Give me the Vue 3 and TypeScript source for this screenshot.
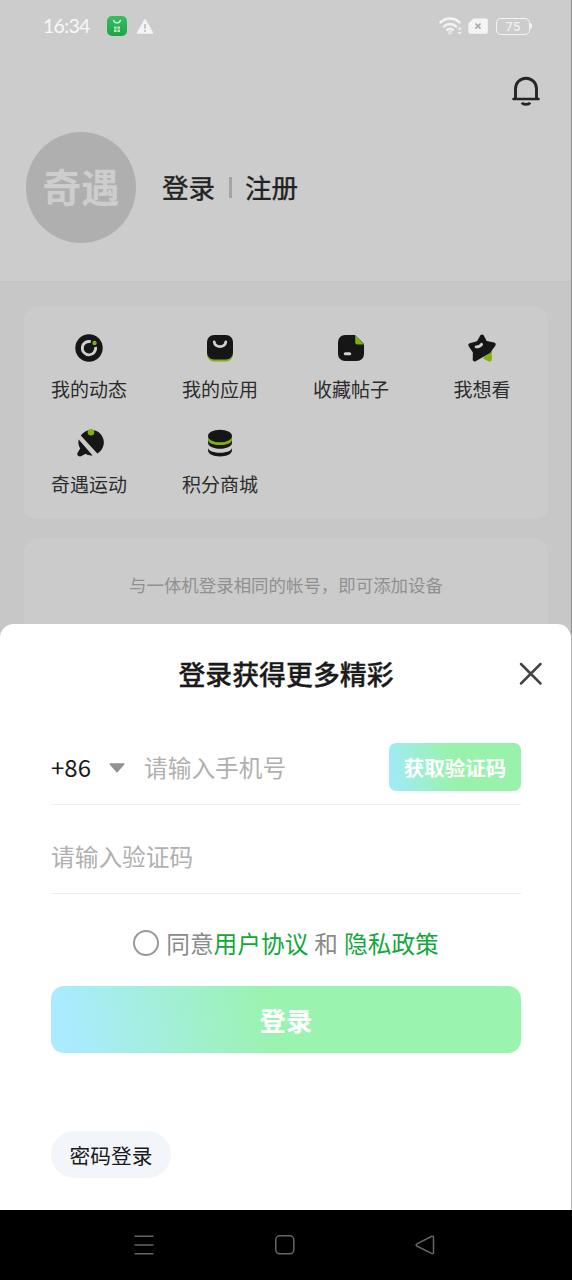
<script setup lang="ts">
import { ref } from 'vue'

type IconName = 'moments' | 'apps' | 'posts' | 'star' | 'sport' | 'coins'

interface Entry {
  icon: IconName
  label: string
}

const entries: Entry[] = [
  { icon: 'moments', label: '我的动态' },
  { icon: 'apps', label: '我的应用' },
  { icon: 'posts', label: '收藏帖子' },
  { icon: 'star', label: '我想看' },
  { icon: 'sport', label: '奇遇运动' },
  { icon: 'coins', label: '积分商城' },
]

const phone = ref('')
const code = ref('')
const agreed = ref(false)
</script>

<template>
  <div class="screen">
    <section class="home">
      <div class="top">
        <div class="status">
          <span class="clock">16:34</span>
          <svg class="app-badge" width="20" height="20" viewBox="0 0 20 20">
            <defs>
              <linearGradient id="badge" x1="0" y1="0" x2="0" y2="1">
                <stop offset="0" stop-color="#35bf63" />
                <stop offset="1" stop-color="#1fa548" />
              </linearGradient>
            </defs>
            <rect width="20" height="20" rx="5" fill="url(#badge)" />
            <path d="M6.6 4.4c1.2 3.2 5.6 3.2 6.8 0" fill="none" stroke="#d5efdc" stroke-width="1.4" stroke-linecap="round" />
            <path d="M7 10.4h2.6v2.4H7zM10.4 10.4H13v2.4h-2.6zM7 13.5h2.6v2.4H7zM10.4 13.5H13v2.4h-2.6z" fill="#b9e6c6" />
          </svg>
          <svg class="warn" width="18" height="17" viewBox="0 0 18 17">
            <path d="M9 1.2 17 15.2H1z" fill="#f4f4f4" stroke="#f4f4f4" stroke-width="1" stroke-linejoin="round" />
            <path d="M9 6v4.8M9 12v2" stroke="#c2c2c2" stroke-width="1.8" />
          </svg>
          <span class="spacer"></span>
          <svg class="wifi" width="24" height="20" viewBox="0 0 24 20" fill="none" stroke="#f4f4f4" stroke-width="2.4" stroke-linecap="round">
            <path d="M1.5 6.4c5.4-5.3 13.6-5.3 19 0M5 10.4c3.5-3.3 8.5-3.3 12 0M8.3 14c1.7-1.5 3.7-1.5 5.4 0" />
            <circle cx="11" cy="16.7" r=".5" />
            <path d="m18.6 13.4 2.1-2.4 2.1 2.4zM18.6 15.9l2.1 2.4 2.1-2.4z" fill="#f4f4f4" stroke="none" />
          </svg>
          <svg class="sim" width="20" height="17" viewBox="0 0 20 17">
            <path d="M5.5.5H18a1.8 1.8 0 0 1 1.8 1.8V14a1.8 1.8 0 0 1-1.8 1.8H2.2A1.8 1.8 0 0 1 .4 14V5.5z" fill="#f4f4f4" />
            <path d="m7.4 5.5 5.2 5.2m0-5.2-5.2 5.2" stroke="#a9a9a9" stroke-width="1.7" />
          </svg>
          <span class="battery">75</span>
        </div>

        <svg class="bell" width="30" height="32" viewBox="0 0 30 32" fill="none" stroke="#242424" stroke-width="2.9">
          <path d="M4.5 24V13.7a10.5 10.5 0 0 1 21 0V24" />
          <path d="M2.5 24h25" stroke-linecap="round" stroke-width="2.6" />
          <path d="M10.8 27.7c1.6 2.3 6.8 2.3 8.4 0" stroke-width="2.8" />
        </svg>

        <div class="profile">
          <div class="avatar">奇遇</div>
          <div class="auth">
            <span>登录</span>
            <i class="bar"></i>
            <span>注册</span>
          </div>
        </div>
      </div>

      <div class="card grid">
        <div v-for="e in entries" :key="e.label" class="entry">
          <svg width="30" height="30" viewBox="0 0 30 30" class="icon">
            <template v-if="e.icon === 'moments'">
              <circle cx="15" cy="15" r="13.7" fill="#161616" />
              <path d="M16.8 8.7a6.7 6.7 0 1 0 4.8 5.3" fill="none" stroke="#d0d0d0" stroke-width="2.9" />
              <circle cx="20.5" cy="10" r="2.2" fill="#80b010" />
            </template>
            <template v-else-if="e.icon === 'apps'">
              <rect x="2" y="3" width="26" height="25.5" rx="7" fill="#80b010" />
              <path d="M9 2h12a7 7 0 0 1 7 7v10.5a7 7 0 0 1-7 7H9a7 7 0 0 1-7-7V9a7 7 0 0 1 7-7z" fill="#161616" />
              <path d="M9.2 8.8c.7 6.3 10.9 6.3 11.6 0" fill="none" stroke="#d0d0d0" stroke-width="2.8" stroke-linecap="round" />
            </template>
            <template v-else-if="e.icon === 'posts'">
              <path d="M9 2h10l9 9v10a7 7 0 0 1-7 7H9a7 7 0 0 1-7-7V9a7 7 0 0 1 7-7z" fill="#161616" />
              <path d="M19.2 2 28 11.400h-6.300a2.500 2.500 0 0 1-2.500-2.500z" fill="#80b010" />
              <path d="M9.3 20.7h4.4" stroke="#d0d0d0" stroke-width="3" stroke-linecap="round" />
            </template>
            <template v-else-if="e.icon === 'star'">
              <path d="M17 25 24 18.5 24 26.5c-.2 1.2-1.4 1.5-2.5 1z" fill="#80b010" stroke="#80b010" stroke-width="1.6" stroke-linejoin="round" />
              <path d="M15 3.5 18.3 9.7 26.7 11.5 21.8 18.2 7.7 26.5 7.9 18.8 3.3 12.2 11.3 10z" fill="#161616" stroke="#161616" stroke-width="4" stroke-linejoin="round" />
              <path d="M9.1 13.9c2.5.1 4.3-.8 5.5-2.5" fill="none" stroke="#d0d0d0" stroke-width="2.9" stroke-linecap="round" />
            </template>
            <template v-else-if="e.icon === 'sport'">
              <path d="M6.8 7.5A12.6 12.6 0 1 1 23.3 25.6z" fill="#161616" />
              <path d="M4.7 11.5 18.600 27.400c-3 .3-5.300-.6-7-1.700l-4.700 2.500c-2.200 1-4.500-1.200-3.300-3.400l2.600-4.300c-1.800-3-2.300-6-1.500-9z" fill="#161616" />
              <circle cx="17" cy="4.3" r="3.3" fill="#80b010" />
            </template>
            <template v-else>
              <path d="M3 20.2v2c0 3.8 5.4 6.2 12 6.2s12-2.4 12-6.2v-2c-2 6-22 6-24 0z" fill="#161616" />
              <path d="M3 10.6v4.2c0 3.5 5.4 6 12 6s12-2.5 12-6v-4.2z" fill="#161616" />
              <path d="M3 8.700v3.200c0 3 5.400 5.200 12 5.200s12-2.200 12-5.200V8.700z" fill="#80b010" />
              <ellipse cx="15" cy="8" rx="12" ry="6.3" fill="#161616" />
            </template>
          </svg>
          <span class="label">{{ e.label }}</span>
        </div>
      </div>

      <div class="card notice">与一体机登录相同的帐号，即可添加设备</div>
    </section>

    <section class="sheet">
      <header class="sheet-head">
        <h1>登录获得更多精彩</h1>
        <svg class="close" width="24" height="24" viewBox="0 0 24 24">
          <path d="M2 2l19.500 19.500M21.500 2l-19.500 19.500" stroke="#444" stroke-width="2.5" stroke-linecap="round" />
        </svg>
      </header>

      <div class="field phone">
        <span class="prefix">+86</span>
        <svg class="caret" width="16" height="10" viewBox="0 0 16 10">
          <path d="M1.2 1h13.6L8 8.8z" fill="#929292" stroke="#929292" stroke-width="1.4" stroke-linejoin="round" />
        </svg>
        <input v-model="phone" class="phone-input" placeholder="请输入手机号" />
        <button class="send">获取验证码</button>
      </div>

      <div class="field code">
        <input v-model="code" placeholder="请输入验证码" />
      </div>

      <div class="agree">
        <i class="radio" :class="{ on: agreed }" @click="agreed = !agreed"></i>
        <span>同意</span><a>用户协议</a><span class="and">和</span><a>隐私政策</a>
      </div>

      <button class="submit">登录</button>
      <button class="pill">密码登录</button>
    </section>

    <nav class="nav">
      <svg width="22" height="22" viewBox="0 0 22 22">
        <path d="M1.5 2.2h19M1.5 11h19M1.5 19.7h19" stroke="#666" stroke-width="1.5" />
      </svg>
      <svg width="22" height="22" viewBox="0 0 22 22">
        <rect x="1.8" y="1.8" width="18" height="18" rx="4" fill="none" stroke="#666" stroke-width="1.5" />
      </svg>
      <svg width="22" height="22" viewBox="0 0 22 22">
        <path d="M2.8 9.9 17.9 2.3a1.2 1.2 0 0 1 1.6 1v15.3a1.2 1.2 0 0 1-1.6 1L2.8 12a1.2 1.2 0 0 1 0-2.1z" fill="none" stroke="#666" stroke-width="1.5" />
      </svg>
    </nav>
  </div>
</template>

<style>
body {
  margin: 0;
  background: #000;
}
</style>

<style scoped>
.screen {
  width: 572px;
  height: 1280px;
  display: flex;
  flex-direction: column;
  overflow: hidden;
  font-family: "Noto Sans CJK SC", sans-serif;
  color: #1a1a1a;
}
.screen * {
  box-sizing: border-box;
}
svg {
  display: block;
  flex: none;
}
button,
input {
  border: 0;
  padding: 0;
  margin: 0;
  background: none;
  font-family: inherit;
}
.home {
  height: 640px;
  flex: none;
  background: #c7c7c7;
  border-right: 1px solid #8e8e8e;
  overflow: hidden;
}
.top {
  height: 282px;
  background: #ccc;
  border-bottom: 1px solid #c4c4c4;
}
.status {
  height: 52px;
  padding: 0 38px 0 43px;
  display: flex;
  align-items: center;
}
.clock {
  width: 64px;
  font: 400 19.5px/24px Lato, "Noto Sans", sans-serif;
  letter-spacing: -0.7px;
  color: #f8f8f8;
}
.warn {
  margin-left: 9px;
}
.spacer {
  flex: 1;
}
.wifi {
  margin-right: 5px;
}
.battery {
  position: relative;
  width: 34px;
  height: 17px;
  margin: 0 3px 0 8px;
  border: 1.5px solid #f4f4f4;
  border-radius: 5px;
  color: #f0f0f0;
  font: 500 13px/15px Roboto, sans-serif;
  text-align: center;
}
.battery::after {
  content: "";
  position: absolute;
  right: -3px;
  top: 4px;
  width: 2px;
  height: 6px;
  border-radius: 0 2px 2px 0;
  background: #f4f4f4;
}
.bell {
  margin: 23px 0 0 511px;
}
.profile {
  margin: 25px 0 0 26px;
  display: flex;
  align-items: center;
}
.avatar {
  width: 110px;
  height: 111px;
  border-radius: 50%;
  background: #afafaf;
  color: #cdcdcd;
  font-size: 38.5px;
  font-weight: 700;
  line-height: 107px;
  text-align: center;
  white-space: nowrap;
}
.auth {
  margin: 0 0 1px 26px;
  display: flex;
  align-items: center;
  font-size: 26.5px;
  font-weight: 400;
  line-height: 40px;
  color: #222;
  -webkit-text-stroke: 0.35px #222;
}
.bar {
  width: 3px;
  height: 21px;
  margin: 0 13px 0 14px;
  background: #a4a4a4;
}
.card {
  margin: 0 23px 0 24px;
  border-radius: 12px;
  background: #cbcbcb;
}
.grid {
  margin-top: 25px;
  height: 212px;
  padding-top: 26px;
  display: grid;
  grid-template-columns: 130px 132px 130px 132px;
  grid-auto-rows: 95px;
}
.entry {
  display: flex;
  flex-direction: column;
  align-items: center;
}
.icon {
  width: 30px;
  height: 30px;
}
.label {
  margin-top: 11px;
  font-size: 19px;
  line-height: 30px;
  color: #2c2c2c;
}
.notice {
  height: 130px;
  margin-top: 20px;
  padding-top: 30px;
  font-size: 17.45px;
  line-height: 31px;
  text-align: center;
  color: #909090;
}
.sheet {
  position: relative;
  height: 586px;
  flex: none;
  margin-top: -16px;
  padding: 0 50px 0 51px;
  border-radius: 14px 14px 0 0;
  border-right: 1px solid #b4b4b4;
  background: #fff;
}
.sheet-head {
  position: relative;
  height: 100px;
  display: flex;
  align-items: center;
  justify-content: center;
}
h1 {
  margin: 0;
  font-size: 26.9px;
  font-weight: 500;
  line-height: 40px;
  color: #1a1a1a;
  -webkit-text-stroke: 0.3px #1a1a1a;
}
.close {
  position: absolute;
  right: -22px;
  top: 38px;
}
.field {
  display: flex;
  align-items: center;
}
.phone {
  height: 81px;
  padding-top: 6px;
  border-bottom: 1px solid #efefef;
}
.prefix {
  width: 58px;
  font-size: 24px;
  line-height: 34px;
}
.phone-input {
  width: 244px;
  margin-left: 19px;
}
.caret {
  margin-top: 1px;
}
input {
  height: 34px;
  width: 100%;
  font-size: 23.7px;
  outline: none;
}
input::placeholder {
  color: #b0b0b0;
  opacity: 1;
}
.send {
  width: 132px;
  height: 48px;
  flex: none;
  margin-left: auto;
  border-radius: 7px;
  background: linear-gradient(80deg, #a2eafc 0%, #99f2ac 48%);
  color: #fff;
  font-size: 20.5px;
  font-weight: 700;
  line-height: 48px;
}
.code {
  height: 89px;
  padding-top: 13px;
  border-bottom: 1px solid #ececec;
}
.agree {
  height: 92px;
  display: flex;
  align-items: center;
  justify-content: center;
  padding-top: 6px;
  font-size: 23.7px;
  line-height: 36px;
  color: #8a8a8a;
}
.agree a {
  color: #10a838;
}
.and {
  margin: 0 6px;
}
.radio {
  width: 26px;
  height: 26px;
  margin-right: 7px;
  border: 2px solid #999;
  border-radius: 50%;
}
.radio.on {
  background: #10a43a;
}
.submit {
  display: block;
  width: 470px;
  height: 67px;
  border-radius: 13px;
  background: linear-gradient(80deg, #aaebff 4%, #9af3ae 48%);
  color: #fff;
  font-size: 26.5px;
  font-weight: 700;
  line-height: 67px;
}
.pill {
  display: block;
  width: 120px;
  height: 47px;
  margin-top: 78px;
  border-radius: 24px;
  background: #f2f6fa;
  color: #1a1a1a;
  font-size: 20.7px;
  line-height: 48px;
}
.nav {
  height: 70px;
  padding: 0 136px 0 133px;
  display: flex;
  align-items: center;
  justify-content: space-between;
  background: #000;
}
</style>
